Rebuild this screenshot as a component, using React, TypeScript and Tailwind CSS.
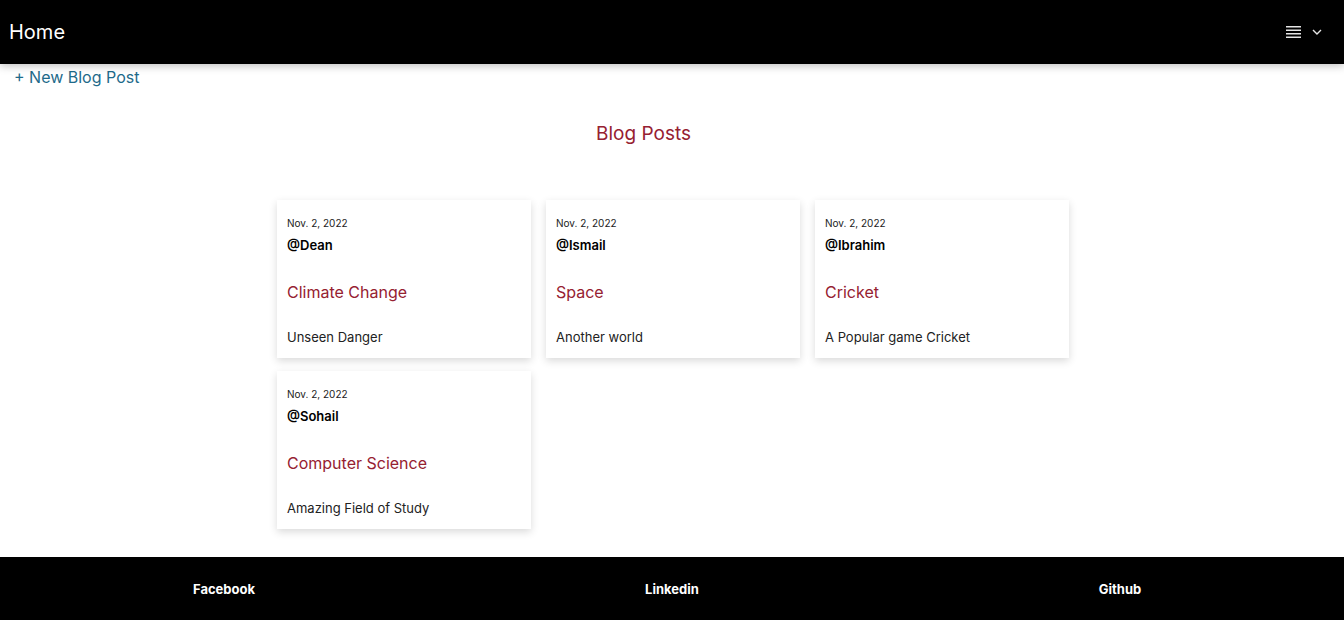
import React from "react";

const posts = [
  { date: "Nov. 2, 2022", user: "@Dean", title: "Climate Change", desc: "Unseen Danger" },
  { date: "Nov. 2, 2022", user: "@Ismail", title: "Space", desc: "Another world" },
  { date: "Nov. 2, 2022", user: "@Ibrahim", title: "Cricket", desc: "A Popular game Cricket" },
  { date: "Nov. 2, 2022", user: "@Sohail", title: "Computer Science", desc: "Amazing Field of Study" },
];

export default function App() {
  return (
    <div className="flex min-h-[620px] flex-col bg-white" style={{ fontFamily: "Inter, 'Noto Sans', sans-serif" }}>
      <nav className="relative z-10 flex h-16 items-center justify-between bg-black pl-[9px] pr-[22px] shadow-[0_2px_8px_rgba(0,0,0,0.25)]">
        <span className="text-[20px] text-white">Home</span>
        <div className="flex items-center gap-[10px]">
          <svg width="16" height="14" viewBox="0 0 16 14">
            <rect x="0" y="1" width="15" height="1.5" fill="#e5e5e5" />
            <rect x="0" y="4.5" width="15" height="1.5" fill="#e5e5e5" />
            <rect x="0" y="8" width="15" height="1.5" fill="#e5e5e5" />
            <rect x="0" y="11.5" width="15" height="1.5" fill="#e5e5e5" />
          </svg>
          <svg width="10" height="8" viewBox="0 0 10 8">
            <path d="M1 2 L5 6 L9 2" stroke="#e5e5e5" strokeWidth="1.4" fill="none" />
          </svg>
        </div>
      </nav>
      <main className="flex-1 pb-[27px]">
        <div className="pl-[14px] pt-[2px] text-[16px] leading-[22px] text-[#1e6a8a]">+ New Blog Post</div>
        <h1 className="mt-[34px] pr-[57px] text-center text-[19px] leading-[24px] text-[#962131]">Blog Posts</h1>
        <div className="ml-[277px] mt-[54px] grid w-[791px] grid-cols-[254px_254px_254px] gap-x-[15px] gap-y-[13px]">
          {posts.map((p) => (
            <div key={p.user} className="h-[158px] bg-white px-[10px] pt-[16px] shadow-[0_3px_8px_rgba(0,0,0,0.15)]">
              <div className="text-[10px] leading-[14px] text-[#222]">{p.date}</div>
              <div className="mt-[7px] text-[13px] font-semibold leading-[16px] text-black">{p.user}</div>
              <div className="mt-[29px] text-[16px] leading-[20px] text-[#962131]">{p.title}</div>
              <div className="mt-[27px] text-[13px] leading-[16px] text-[#222]">{p.desc}</div>
            </div>
          ))}
        </div>
      </main>
      <footer className="grid h-[63px] grid-cols-3 items-center bg-black pt-[2px] text-[13px] font-bold text-white">
        <div className="text-center">Facebook</div>
        <div className="text-center">Linkedin</div>
        <div className="text-center">Github</div>
      </footer>
    </div>
  );
}
